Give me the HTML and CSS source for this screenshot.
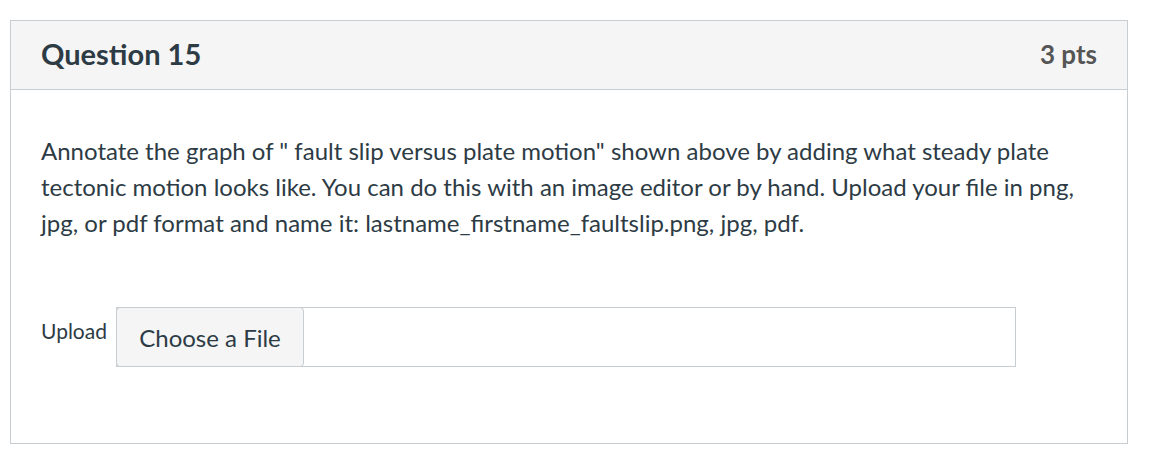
FILE: index.html
```html
<!DOCTYPE html>
<html>
<head>
<meta charset="utf-8">
<link rel="stylesheet" href="styles.css">
</head>
<body>
<div class="question">
  <div class="header">
    <span class="title">Question 15</span>
    <span class="pts">3 pts</span>
  </div>
  <div class="content">
    <p class="text">Annotate the graph of " fault slip versus plate motion" shown above by adding what steady plate tectonic motion looks like. You can do this with an image editor or by hand. Upload your file in png, jpg, or pdf format and name it: lastname_firstname_faultslip.png, jpg, pdf.</p>
    <div class="upload">
      <span class="label">Upload</span>
      <div class="field">
        <span class="btn">Choose a File</span>
      </div>
    </div>
  </div>
</div>
</body>
</html>
```
FILE: styles.css
```css
html, body { margin: 0; padding: 0; background: #fff; }
body { font-family: Lato, "Open Sans", sans-serif; color: #2d3b45; padding: 20px 0 0 10px; }
.question { width: 1118px; height: 424px; border: 1px solid #c7cdd1; box-sizing: border-box; }
.header { height: 69px; box-sizing: border-box; background: #f5f5f5; border-bottom: 1px solid #c7cdd1; display: flex; justify-content: space-between; align-items: center; padding: 0 30px 3px 30px; }
.title { font-weight: 700; font-size: 29px; color: #2d3b45; }
.pts { font-weight: 700; font-size: 26px; color: #555; }
.content { padding: 43px 30px 0 30px; }
.text { margin: 0; font-size: 24px; line-height: 36px; width: 1060px; }
.upload { display: flex; align-items: flex-start; margin-top: 66px; }
.label { font-size: 21px; margin-top: 11px; width: 75px; }
.field { width: 900px; height: 60px; border: 1px solid #c7cdd1; box-sizing: border-box; display: flex; }
.btn { width: 188px; height: 60px; margin: -1px 0 0 -1px; box-sizing: border-box; background: #f5f5f5; border: 1px solid #c7cdd1; border-radius: 4px; font-size: 24px; display: flex; align-items: center; justify-content: center; color: #2d3b45; }
```
